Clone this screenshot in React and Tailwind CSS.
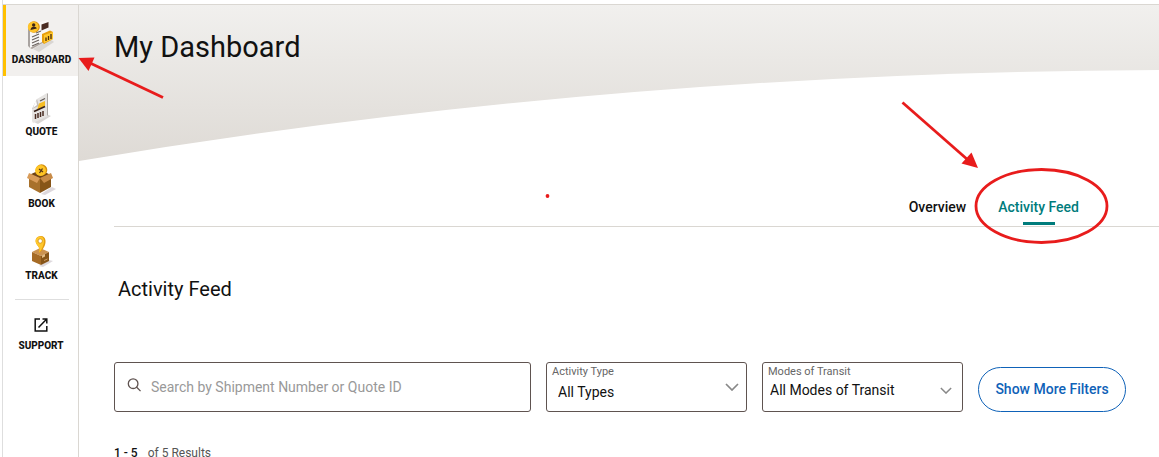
import React, { useState } from 'react';

const DashboardIcon = () => (
  <svg className="w-8 h-9" viewBox="2 0 32 36" aria-hidden="true">
    <path d="M9 32 L26 22 L30 25 L15 35 Z" fill="#cfcac8" opacity="0.7" />
    <path d="M4 8 L24 3 V22 L6 31 L4 29 Z" fill="#f8f7f6" />
    <path d="M4 11 L6 12 V31 L4 29 Z" fill="#a9a3a0" />
    <path d="M6 31 L24 22 V23 L8 32 Z" fill="#aaa29d" />
    <path d="M17.500 7.500 L24.500 5 V10.500 L17.500 13.500 Z" fill="#4a2c22" />
    <path d="M8 20 L15 17 M8 23 L15 20 M8 26 L15 23 M8 29 L15 26 M12 16 L17 14" stroke="#6b6460" strokeWidth="1.2" />
    <path d="M18 17 L26 13.5 L29 15 V22 L20 27 L18 25 Z" fill="#e79e0c" />
    <path d="M20 18 L29 15 V22 L20 26 Z" fill="#ffc72c" />
    <path d="M22 20.5 V24 M24.500 19 V23 M27 17 V22" stroke="#4a2c0c" strokeWidth="1.3" />
    <circle cx="10" cy="10" r="5.8" fill="#d98e0b" />
    <circle cx="9.2" cy="10" r="5.4" fill="#ffc42a" />
    <circle cx="9.7" cy="8" r="1.7" fill="#3c2415" />
    <path d="M6.5 13 Q7 9.8 9.7 9.8 Q12.5 9.4 12.8 11.4 Z" fill="#3c2415" />
  </svg>
);

const QuoteIcon = () => (
  <svg className="w-8 h-9" viewBox="2 0 32 36" aria-hidden="true">
    <path d="M10 33 L22 25 L27 27 L14 35 Z" fill="#c9c4c2" opacity="0.7" />
    <path d="M13 10 L23 4 L24 5 V27 L9 34 L8 32 V20 Z" fill="#e6e4e2" />
    <path d="M23 4 L24 5 V27 L23 26 Z" fill="#aaa6a3" />
    <path d="M13 10 L15 17 L8 20 Z" fill="#c4bfbc" />
    <path d="M12 11 L13 16 L9 19 Z" fill="#fff" />
    <path d="M16 12 L21 9.5" stroke="#5c5551" strokeWidth="1.2" />
    <path d="M15 14.5 L21 12 V17 L13 21 Z" fill="#f6bd24" />
    <path d="M10 22.5 L21 17.5" stroke="#372018" strokeWidth="1.7" />
    <path d="M11.5 25 V30 M14 24 V29 M16.5 23 V28 M19 22 V27" stroke="#4a2c22" strokeWidth="1.5" />
  </svg>
);

const BookIcon = () => (
  <svg className="w-8 h-9" viewBox="1 0 32 36" aria-hidden="true">
    <path d="M16 33 L27 26 L31 28 L20 34 Z" fill="#cfc8cd" opacity="0.7" />
    <path d="M4 14 L15 9 L26 14 L15 20 Z" fill="#6e4317" />
    <circle cx="16.500" cy="9" r="5.8" fill="#d6910d" />
    <circle cx="15.500" cy="9.500" r="5.4" fill="#ffc526" />
    <path d="M14 8 L18 11 M17.500 7.500 L14.500 12" stroke="#593817" strokeWidth="1.3" />
    <path d="M4 15 L15 17 V32 L4 26 Z" fill="#a8712b" />
    <path d="M15 17 L26 15 V26 L15 32 Z" fill="#875518" />
    <path d="M4 12 L15 17 L12 22 L2 17 Z" fill="#d99c59" />
    <path d="M26 12 L15 17 L19 22 L28 17 Z" fill="#c88b48" />
  </svg>
);

const TrackIcon = () => (
  <svg className="w-8 h-9" viewBox="1 0 32 36" aria-hidden="true">
    <path d="M14 33 L24 27 L28 28 L18 34 Z" fill="#cfc8cd" opacity="0.7" />
    <path d="M7 19 L15 15 L24 19 L16 23 Z" fill="#cc9350" />
    <path d="M7 19 L16 23 V32 L7 28 Z" fill="#a66b25" />
    <path d="M16 23 L24 19 V28 L16 32 Z" fill="#875518" />
    <path d="M17 22.500 L20 21 V23.500 L17 25 Z" fill="#e5bd83" />
    <path d="M19 27.500 L22.500 26" stroke="#d0a066" strokeWidth="1" />
    <path d="M16 3 C11 3 10 7 11 10 C12 13 16 14 14 20 C18 17 21 12 20.5 7.5 C20 4.5 18.5 3 16 3 Z" fill="#e39c10" />
    <path d="M15 3.5 C11 4 10 7 11 10 C12 13 16 14 14 20 C17 16 19 12 19 8 C19 5 17.5 3.3 15 3.5 Z" fill="#ffc72c" />
    <circle cx="15.2" cy="8" r="2.2" fill="#fff" stroke="#d0900d" strokeWidth="0.8" />
  </svg>
);

const SupportIcon = () => (
  <svg className="w-4 h-4" viewBox="0 0 16 16" fill="none" stroke="#111" strokeWidth="1.5" aria-hidden="true">
    <path d="M7 2 H2.2 V14 H13.8 V9" />
    <path d="M9.5 2 H13.8 V6.5 M13.5 2.3 L5.5 10.5" />
  </svg>
);

const SearchIcon = () => (
  <svg className="w-3.5 h-3.5 mb-1 shrink-0" viewBox="0 0 16 16" fill="none" stroke="#5f5350" strokeWidth="1.5" aria-hidden="true">
    <circle cx="7" cy="6.5" r="5.5" />
    <path d="M10.8 10.3 L15.500 15" />
  </svg>
);

const Chevron = ({ className }) => (
  <svg className={className} viewBox="0 0 14 8" fill="none" stroke="currentColor" strokeWidth="1.7" aria-hidden="true">
    <path d="M1 1 L7 7 L13 1" />
  </svg>
);

const navItems = [
  { label: 'DASHBOARD', icon: DashboardIcon, active: true },
  { label: 'QUOTE', icon: QuoteIcon },
  { label: 'BOOK', icon: BookIcon },
  { label: 'TRACK', icon: TrackIcon },
];

const Sidebar = () => (
  <nav className="w-[76px] shrink-0 border-r border-[#dad7d2] text-[10px] leading-3 font-extrabold text-[#111]">
    <div className="flex flex-col gap-px">
      {navItems.map(({ label, icon: Icon, active }) => (
        <a
          key={label}
          href="#"
          className={`flex flex-col items-center h-[71px] pt-3 gap-px border-l-3 pr-px ${
            active ? 'border-[#ffc000] bg-[#f2f0ee]' : 'border-transparent'
          }`}
        >
          <Icon />
          <span>{label}</span>
        </a>
      ))}
    </div>
    <hr className="ml-3 mr-[9px] mt-[7px] border-[#dedede]" />
    <a href="#" className="flex flex-col items-center gap-[7px] pt-[17px] pl-px">
      <SupportIcon />
      <span>SUPPORT</span>
    </a>
  </nav>
);

const Hero = () => (
  <header className="relative h-[156px] bg-linear-to-b from-[#f1f0ee] to-[#dedad5]">
    <svg className="absolute inset-0 w-full h-full" viewBox="0 0 1080 156" preserveAspectRatio="none" aria-hidden="true">
      <path d="M0 156 Q530 67 1080 65 V156 Z" fill="#fff" />
    </svg>
    <h1 className="relative pl-[35px] pt-6 text-[29px] leading-9 text-[#111]">My Dashboard</h1>
  </header>
);

const Tabs = ({ tab, onChange }) => (
  <div role="tablist" className="flex justify-end gap-8 mt-9 ml-[35px] pr-20 border-b border-[#dad7d2] text-sm leading-5 font-medium">
    {['Overview', 'Activity Feed'].map((name) => (
      <button
        key={name}
        role="tab"
        aria-selected={tab === name}
        onClick={() => onChange(name)}
        className={`flex flex-col items-center gap-[5px] pb-px ${tab === name ? 'text-[#007c7c]' : 'text-[#111]'}`}
      >
        {name}
        <span className={`w-8 h-[3px] ${tab === name ? 'bg-[#007c7c]' : 'bg-transparent'}`} />
      </button>
    ))}
  </div>
);

const Filters = () => (
  <div className="flex items-end gap-[15px] mt-[58px]">
    <label className="flex flex-1 items-center gap-2.5 h-[50px] px-3 border border-[#5f5350] rounded-[3px]">
      <SearchIcon />
      <input
        type="search"
        aria-label="Search by Shipment Number or Quote ID"
        placeholder="Search by Shipment Number or Quote ID"
        className="w-full text-sm leading-5 outline-none placeholder:text-[#999]"
      />
    </label>
    <div className="relative w-[201px] h-[50px] border border-[#5f5350] rounded-[3px]">
      <label htmlFor="type" className="block pl-[5px] pt-0.5 text-[11px] leading-3.5 text-[#666]">Activity Type</label>
      <select id="type" className="block w-full appearance-none pl-[11px] pt-[3px] text-sm leading-5 text-[#111] outline-none">
        <option>All Types</option>
      </select>
      <Chevron className="absolute right-[7px] top-5 w-3.5 h-2 text-[#888] pointer-events-none" />
    </div>
    <div className="relative w-[201px] h-[50px] border border-[#5f5350] rounded-[3px]">
      <label htmlFor="modes" className="block pl-[5px] pt-0.5 text-[11px] leading-3.5 text-[#666]">Modes of Transit</label>
      <select id="modes" className="block w-full appearance-none pl-[7px] pt-px text-sm leading-5 text-[#111] outline-none">
        <option>All Modes of Transit</option>
      </select>
      <Chevron className="absolute right-2.5 top-6 w-3 h-[7px] text-[#888] pointer-events-none" />
    </div>
    <button className="w-[148px] h-[45px] pb-0.5 border border-[#0f62b8] rounded-full text-sm font-medium text-[#0f62b8]">
      Show More Filters
    </button>
  </div>
);

// Hand-drawn style callouts over the page
const Annotations = () => (
  <svg className="absolute left-0 top-0 w-full h-auto pointer-events-none" viewBox="0 0 1159 457" aria-hidden="true">
    <g stroke="#e81c1c" strokeWidth="2.8" fill="none">
      <path d="M163 97.500 L90 63" />
      <path d="M902.500 102.500 L968 160" />
      <ellipse cx="1041.500" cy="206" rx="65.500" ry="36.500" />
    </g>
    <g fill="#e81c1c">
      <path d="M78.500 58 L94.500 57.500 L88.500 71 Z" />
      <path d="M978 168 L961.500 163.500 L971.500 152.500 Z" />
      <circle cx="547.500" cy="196" r="1.900" />
    </g>
  </svg>
);

export default function App() {
  const [tab, setTab] = useState('Activity Feed');

  return (
    <div className="relative min-h-screen bg-white pl-0.5 font-[Roboto,sans-serif]">
      <div className="min-h-screen border-l border-[#dedede] pt-1">
        <div className="flex items-stretch border-t border-[#dad7d2]">
          <Sidebar />
          <main className="flex-1 min-w-0">
            <Hero />
            <Tabs tab={tab} onChange={setTab} />
            <section className="pl-[35px] pr-[33px]">
              <h2 className="pl-1 pt-12 text-xl leading-[29px] text-[#111]">Activity Feed</h2>
              <Filters />
              <p className="flex gap-2.5 mt-9 text-xs leading-2.5 text-[#555]">
                <span className="font-medium text-[#111]">1 - 5</span>
                <span>of 5 Results</span>
              </p>
            </section>
          </main>
        </div>
      </div>
      <Annotations />
    </div>
  );
}
